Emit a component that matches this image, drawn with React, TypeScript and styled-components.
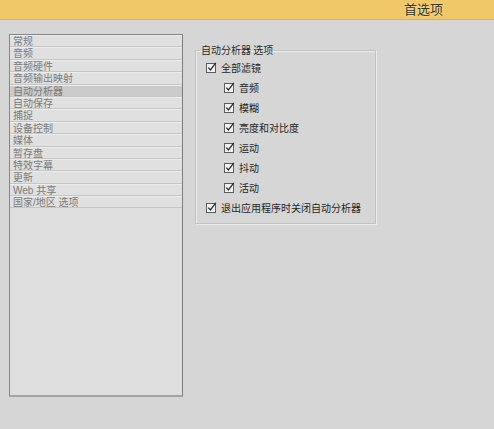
import React from "react";
import styled, { createGlobalStyle } from "styled-components";

const Global = createGlobalStyle`
  html, body { margin: 0; padding: 0; background: #d6d6d6; }
  body { font-family: "Liberation Sans", "Noto Sans CJK SC", sans-serif; }
  * { box-sizing: border-box; }
`;

const Page = styled.div`
  width: 494px;
  height: 429px;
  background: #d6d6d6;
  display: flex;
  flex-direction: column;
  overflow: hidden;
`;

const Header = styled.div`
  height: 20px;
  flex: none;
  background: #f0c868;
  border-bottom: 1px solid #d9b35a;
  display: flex;
  justify-content: flex-end;
  align-items: flex-start;
  padding: 1px 51px 0 0;
`;

const Title = styled.div`
  font-family: "Noto Sans CJK SC", sans-serif;
  font-size: 13px;
  line-height: 15px;
  color: #35301f;
  text-shadow: 0 0 2px #fff2c8;
`;

const Body = styled.div`
  display: flex;
  align-items: flex-start;
  padding: 14px 0 0 9px;
  gap: 12px;
`;

const List = styled.div`
  width: 174px;
  height: 363px;
  background: #dedede;
  border-top: 1px solid #868686;
  border-left: 1px solid #868686;
  border-right: 1px solid #7e7e7e;
  border-bottom: 2px solid #a4a4a4;
  display: flex;
  flex-direction: column;
`;

const Item = styled.div<{ $selected?: boolean }>`
  height: 12.4px;
  flex: none;
  padding-left: 3px;
  font-family: "Liberation Sans", "Noto Sans CJK SC", sans-serif;
  font-size: 10px;
  line-height: 11px;
  color: #7a7a7a;
  background: ${(p) => (p.$selected ? "#cbcbcb" : "#e0e0e0")};
  border-bottom: 1px solid #c6c6c6;
  border-top: 1px solid #ececec;
  white-space: nowrap;
  overflow: hidden;
`;

const Group = styled.fieldset`
  margin: 10px 0 0 0;
  width: 181px;
  padding: 1px 0 6px 0;
  border: 1px solid #c2c2c2;
  box-shadow: 1px 1px 0 #ececec, inset 1px 1px 0 #ececec;
  min-inline-size: 0;
`;

const Legend = styled.legend`
  font-family: "Noto Sans CJK SC", sans-serif;
  font-size: 10px;
  line-height: 12px;
  color: #2a2a2a;
  padding: 0 1px;
  margin-left: 4px;
`;

const Row = styled.label<{ $level: number }>`
  display: flex;
  align-items: center;
  height: 20px;
  padding-left: ${(p) => 10 + p.$level * 18}px;
  gap: 4px;
  font-family: "Noto Sans CJK SC", sans-serif;
  font-size: 10px;
  color: #262626;
  white-space: nowrap;
`;

const Box = styled.svg`
  flex: none;
  display: block;
`;

const Check = () => (
  <Box width="11" height="11" viewBox="0 0 11 11">
    <rect x="0.5" y="1.5" width="9" height="9" fill="#f2f2f2" stroke="#5c5c5c" />
    <path d="M2.3 5.6 L4.4 7.9 L9.8 0.8" fill="none" stroke="#2e2e2e" strokeWidth="1.3" />
  </Box>
);

const items = [
  "常规",
  "音频",
  "音频硬件",
  "音频输出映射",
  "自动分析器",
  "自动保存",
  "捕捉",
  "设备控制",
  "媒体",
  "暂存盘",
  "特效字幕",
  "更新",
  "Web 共享",
  "国家/地区 选项",
];

const options: { label: string; level: number }[] = [
  { label: "全部滤镜", level: 0 },
  { label: "音频", level: 1 },
  { label: "模糊", level: 1 },
  { label: "亮度和对比度", level: 1 },
  { label: "运动", level: 1 },
  { label: "抖动", level: 1 },
  { label: "活动", level: 1 },
  { label: "退出应用程序时关闭自动分析器", level: 0 },
];

export default function App() {
  return (
    <Page>
      <Global />
      <Header>
        <Title>首选项</Title>
      </Header>
      <Body>
        <List>
          {items.map((it) => (
            <Item key={it} $selected={it === "自动分析器"}>
              {it}
            </Item>
          ))}
        </List>
        <Group>
          <Legend>自动分析器 选项</Legend>
          {options.map((o) => (
            <Row key={o.label} $level={o.level}>
              <Check />
              <span>{o.label}</span>
            </Row>
          ))}
        </Group>
      </Body>
    </Page>
  );
}
